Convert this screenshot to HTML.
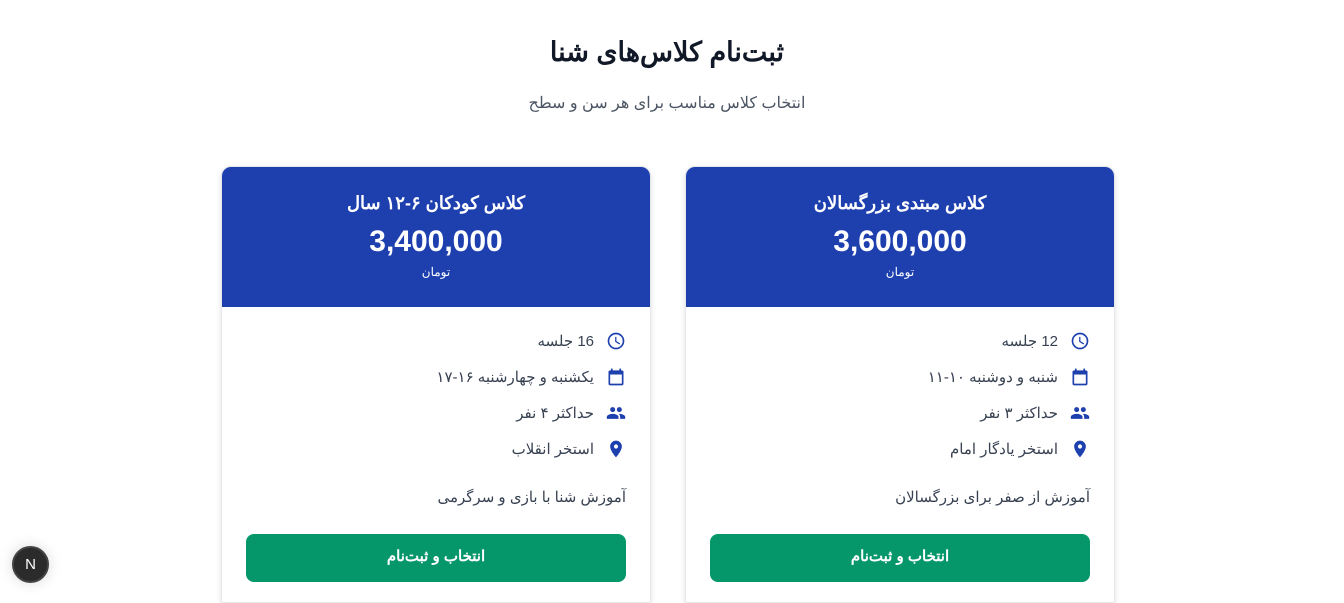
<!DOCTYPE html>
<html dir="rtl"><head><meta charset="utf-8"><style>
*{box-sizing:border-box;margin:0;padding:0}
html,body{width:1344px;height:603px;overflow:hidden}
body{background:#fff;font-family:"Liberation Sans","Noto Sans CJK SC",sans-serif;color:#1f2937;position:relative}
h1{position:absolute;top:37px;left:0;width:1334px;text-align:center;font-size:27px;font-weight:bold;color:#111827}
.sub{position:absolute;top:93px;left:0;width:1334px;text-align:center;font-size:16px;color:#4b5563}
.card{position:absolute;top:166px;width:430px;height:437px;border-radius:10px 10px 0 0;background:#fff;box-shadow:0 2px 6px rgba(0,0,0,.12);border:1px solid #e5e7eb;overflow:hidden}
.hd{background:#1e40af;height:140px;color:#fff;text-align:center}
.t{padding-top:26px;font-size:18px;font-weight:bold;height:57px}
.p{font-size:30px;font-weight:bold;font-family:"Liberation Sans",sans-serif;direction:ltr;line-height:36px}
.u{font-size:12px;margin-top:5px}
.rows{padding:16px 24px 0 24px}
.r{display:flex;align-items:center;height:36px;font-size:15px;color:#374151}
.r svg{width:20px;height:20px;margin-left:12px;fill:#1e40af;flex:none}
.d{padding:21px 24px 0;font-size:15px;color:#374151;height:67px}
.b{margin:0 24px;height:48px;background:#059669;border-radius:8px;color:#fff;font-size:15px;font-weight:bold;text-align:center;line-height:46px}
.n{position:absolute;left:12px;top:546px;width:37px;height:37px;border-radius:50%;background:#2b2b2b;border:2px solid #444;color:#fff;text-align:center;line-height:33px;font-size:15px;box-shadow:0 0 14px rgba(0,0,0,.15);direction:ltr}
</style></head><body>
<h1>ثبت‌نام کلاس‌های شنا</h1>
<div class="sub">انتخاب کلاس مناسب برای هر سن و سطح</div>

<div class="card" style="left:685px">
<div class="hd"><div class="t">کلاس مبتدی بزرگسالان</div><div class="p">3,600,000</div><div class="u">تومان</div></div>
<div class="rows">
<div class="r"><svg viewBox="0 0 24 24"><path d="M12 2a10 10 0 1 0 0 20 10 10 0 0 0 0-20zm0 18a8 8 0 1 1 0-16 8 8 0 0 1 0 16zm.5-13H11v6l5.2 3.2.8-1.3-4.5-2.7z"/></svg>12 جلسه</div>
<div class="r"><svg viewBox="0 0 24 24"><path d="M19 4h-1V2h-2v2H8V2H6v2H5a2 2 0 0 0-2 2v14a2 2 0 0 0 2 2h14a2 2 0 0 0 2-2V6a2 2 0 0 0-2-2zm0 16H5V9h14z"/></svg>شنبه و دوشنبه ۱۰-۱۱</div>
<div class="r"><svg viewBox="0 0 24 24"><path d="M16 11a3 3 0 1 0 0-6 3 3 0 0 0 0 6zm-8 0a3 3 0 1 0 0-6 3 3 0 0 0 0 6zm0 2c-2.3 0-7 1.2-7 3.5V19h14v-2.5C15 14.2 10.3 13 8 13zm8 0c-.3 0-.6 0-1 .1 1.2.8 2 2 2 3.4V19h6v-2.5c0-2.3-4.7-3.5-7-3.5z"/></svg>حداکثر ۳ نفر</div>
<div class="r"><svg viewBox="0 0 24 24"><path d="M12 2a7 7 0 0 0-7 7c0 5.2 7 13 7 13s7-7.8 7-13a7 7 0 0 0-7-7zm0 9.5a2.5 2.5 0 1 1 0-5 2.5 2.5 0 0 1 0 5z"/></svg>استخر یادگار امام</div>
</div>
<div class="d">آموزش از صفر برای بزرگسالان</div>
<div class="b">انتخاب و ثبت‌نام</div>
</div>

<div class="card" style="left:221px">
<div class="hd"><div class="t">کلاس کودکان ۶-۱۲ سال</div><div class="p">3,400,000</div><div class="u">تومان</div></div>
<div class="rows">
<div class="r"><svg viewBox="0 0 24 24"><path d="M12 2a10 10 0 1 0 0 20 10 10 0 0 0 0-20zm0 18a8 8 0 1 1 0-16 8 8 0 0 1 0 16zm.5-13H11v6l5.2 3.2.8-1.3-4.5-2.7z"/></svg>16 جلسه</div>
<div class="r"><svg viewBox="0 0 24 24"><path d="M19 4h-1V2h-2v2H8V2H6v2H5a2 2 0 0 0-2 2v14a2 2 0 0 0 2 2h14a2 2 0 0 0 2-2V6a2 2 0 0 0-2-2zm0 16H5V9h14z"/></svg>یکشنبه و چهارشنبه ۱۶-۱۷</div>
<div class="r"><svg viewBox="0 0 24 24"><path d="M16 11a3 3 0 1 0 0-6 3 3 0 0 0 0 6zm-8 0a3 3 0 1 0 0-6 3 3 0 0 0 0 6zm0 2c-2.3 0-7 1.2-7 3.5V19h14v-2.5C15 14.2 10.3 13 8 13zm8 0c-.3 0-.6 0-1 .1 1.2.8 2 2 2 3.4V19h6v-2.5c0-2.3-4.7-3.5-7-3.5z"/></svg>حداکثر ۴ نفر</div>
<div class="r"><svg viewBox="0 0 24 24"><path d="M12 2a7 7 0 0 0-7 7c0 5.2 7 13 7 13s7-7.8 7-13a7 7 0 0 0-7-7zm0 9.5a2.5 2.5 0 1 1 0-5 2.5 2.5 0 0 1 0 5z"/></svg>استخر انقلاب</div>
</div>
<div class="d">آموزش شنا با بازی و سرگرمی</div>
<div class="b">انتخاب و ثبت‌نام</div>
</div>

<div class="n">N</div>
</body></html>
